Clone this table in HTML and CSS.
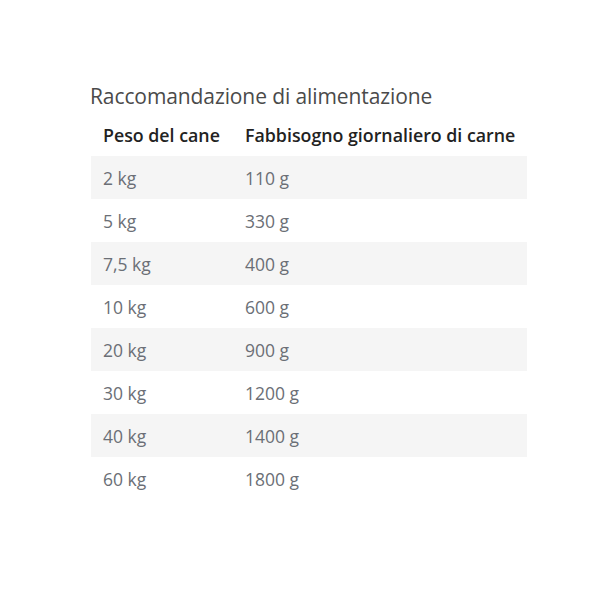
FILE: index.html
```html
<!DOCTYPE html>
<html lang="it">
<head>
<meta charset="utf-8">
<link rel="stylesheet" href="styles.css">
</head>
<body>
<section class="feeding">
  <h2 class="title">Raccomandazione di alimentazione</h2>
  <table class="table">
    <thead>
      <tr><th>Peso del cane</th><th>Fabbisogno giornaliero di carne</th></tr>
    </thead>
    <tbody>
      <tr><td>2 kg</td><td>110 g</td></tr>
      <tr><td>5 kg</td><td>330 g</td></tr>
      <tr><td>7,5 kg</td><td>400 g</td></tr>
      <tr><td>10 kg</td><td>600 g</td></tr>
      <tr><td>20 kg</td><td>900 g</td></tr>
      <tr><td>30 kg</td><td>1200 g</td></tr>
      <tr><td>40 kg</td><td>1400 g</td></tr>
      <tr><td>60 kg</td><td>1800 g</td></tr>
    </tbody>
  </table>
</section>
</body>
</html>
```

FILE: styles.css
```css
html, body {
  margin: 0;
  padding: 0;
  background: #fff;
}
body {
  font-family: "Open Sans", "Noto Sans", sans-serif;
}
.feeding {
  width: 436px;
  padding: 82px 0 0 91px;
}
.title {
  margin: 0 0 0 -1px;
  font-size: 21px;
  font-weight: 500;
  line-height: 28px;
  color: #4a4a4a;
  letter-spacing: -0.1px;
}
.table {
  width: 436px;
  border-collapse: collapse;
  margin-top: 4px;
}
.table th {
  text-align: left;
  font-size: 17.8px;
  font-weight: 600;
  color: #222;
  height: 42px;
  padding: 0 0 0 12px;
  letter-spacing: 0;
}
.table th:first-child {
  width: 130px;
}
.table td {
  font-size: 17.5px;
  color: #6b6f76;
  height: 43px;
  padding: 0 0 0 12px;
  letter-spacing: 0;
}
.table tbody tr:nth-child(odd) {
  background: #f5f5f5;
}
```
